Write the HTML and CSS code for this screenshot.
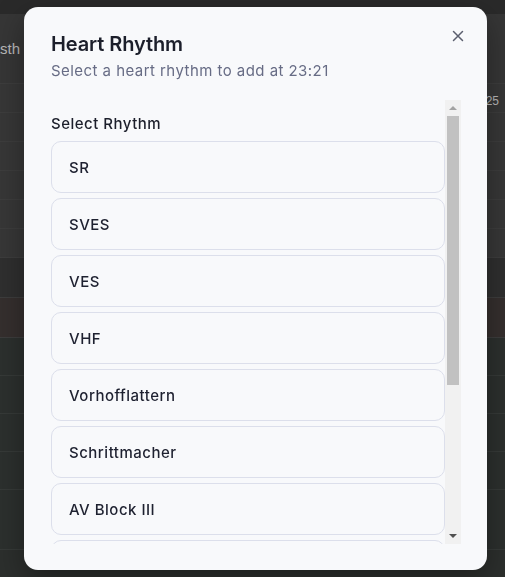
FILE: index.html
```html
<!DOCTYPE html>
<html lang="de">
<head>
<meta charset="utf-8">
<title>Heart Rhythm</title>
<link rel="stylesheet" href="styles.css">
</head>
<body>
<div class="page">
  <div class="band band-top"></div>
  <div class="band band-head"><span class="bg-text bg-left">Ästh</span></div>
  <div class="band band-row"><span class="bg-text bg-right">25</span></div>
  <div class="band band-row"></div>
  <div class="band band-row"></div>
  <div class="band band-row"></div>
  <div class="band band-row"></div>
  <div class="band band-row"></div>
  <div class="band band-dark"></div>
  <div class="band band-red"></div>
  <div class="band band-green"></div>
  <div class="band band-green"></div>
  <div class="band band-green"></div>
  <div class="band band-green"></div>
  <div class="band band-green last"><span class="red-line"></span></div>
</div>

<div class="overlay">
  <div class="modal" role="dialog" aria-labelledby="dlg-title">
    <button class="close" aria-label="Close">
      <svg width="12" height="12" viewBox="0 0 12 12"><path d="M1.5 1.5 L10.5 10.5 M10.5 1.5 L1.5 10.5" stroke="#5b5f6e" stroke-width="1.5" stroke-linecap="round"/></svg>
    </button>
    <header class="modal-head">
      <h2 id="dlg-title" class="title">Heart Rhythm</h2>
      <p class="subtitle">Select a heart rhythm to add at 23:21</p>
    </header>
    <div class="scroll-wrap">
      <div class="scroller">
        <div class="label">Select Rhythm</div>
        <div class="list">
          <button class="item">SR</button>
          <button class="item">SVES</button>
          <button class="item">VES</button>
          <button class="item">VHF</button>
          <button class="item">Vorhofflattern</button>
          <button class="item">Schrittmacher</button>
          <button class="item">AV Block III</button>
          <button class="item">AV Block II</button>
          <button class="item">AV Block I</button>
          <button class="item">Kammerflimmern</button>
          <button class="item">Asystolie</button>
        </div>
      </div>
      <div class="sbar" aria-hidden="true">
        <div class="sbtn"><span class="arrow-up"></span></div>
        <div class="strack"><div class="sthumb"></div></div>
        <div class="sbtn"><span class="arrow-down"></span></div>
      </div>
    </div>
  </div>
</div>
</body>
</html>
```

FILE: styles.css
```css
* { box-sizing: border-box; }
html, body { margin: 0; padding: 0; }
body {
  width: 505px;
  height: 577px;
  overflow: hidden;
  background: #2c2f2d;
  font-family: "Inter", "Noto Sans", sans-serif;
}

.page {
  display: flex;
  flex-direction: column;
}
.band {
  position: relative;
  border-bottom: 1px solid #3d3d3d;
}
.band-top { height: 14px; background: #2a2a2a; border-bottom: none; }
.band-head { height: 70px; background: #363636; }
.band-row { height: 29px; background: #373737; }
.band-dark { height: 40px; background: #2f2f2f; }
.band-red { height: 40px; background: #352f2e; }
.band-green { height: 38px; background: #2c302e; border-bottom-color: #363a38; }
.band-green.last { height: 60px; }

.bg-text {
  position: absolute;
  color: #b9b9b9;
  font-family: "Liberation Sans", sans-serif;
  font-size: 15px;
}
.bg-left { left: -10px; top: 26px; }
.bg-right { right: 6px; top: 10px; font-size: 12px; }
.red-line {
  position: absolute;
  left: 372px;
  bottom: 0;
  width: 2px;
  height: 12px;
  background: #6b1a1a;
}

.overlay {
  position: fixed;
  inset: 0;
  display: flex;
  justify-content: center;
  padding-top: 7px;
}

.modal {
  position: relative;
  width: 463px;
  height: 563px;
  margin-left: 6px;
  background: #f8f9fb;
  border-radius: 14px;
  box-shadow: 0 10px 30px rgba(0,0,0,0.35);
  padding: 25px 26px 26px 26px;
  display: flex;
  flex-direction: column;
}

.close {
  position: absolute;
  top: 21px;
  right: 21px;
  width: 16px;
  height: 16px;
  padding: 2px;
  border: none;
  background: transparent;
  display: flex;
  align-items: center;
  justify-content: center;
}

.modal-head { padding-left: 1px; }
.title {
  margin: 0;
  font-size: 20px;
  line-height: 24px;
  font-weight: 600;
  color: #1c1f2b;
  letter-spacing: -0.1px;
}
.subtitle {
  margin: 5px 0 0;
  font-size: 15px;
  line-height: 20px;
  color: #676c85;
  letter-spacing: 0.45px;
}

.scroll-wrap {
  margin-top: 19px;
  flex: 1;
  min-height: 0;
  display: flex;
}
.scroller {
  flex: 1;
  min-width: 0;
  overflow: hidden;
}

.sbar {
  width: 16px;
  display: flex;
  flex-direction: column;
  background: #f1f1f1;
}
.sbtn {
  height: 16px;
  display: flex;
  align-items: center;
  justify-content: center;
}
.arrow-up {
  width: 0;
  height: 0;
  border-left: 4px solid transparent;
  border-right: 4px solid transparent;
  border-bottom: 4px solid #a3a3a3;
}
.arrow-down {
  width: 0;
  height: 0;
  border-left: 4px solid transparent;
  border-right: 4px solid transparent;
  border-top: 4px solid #505050;
}
.strack {
  flex: 1;
  padding: 0 2px;
}
.sthumb {
  height: 269px;
  background: #c1c1c1;
}

.label {
  padding: 14px 0 8px 1px;
  font-size: 15px;
  line-height: 19px;
  font-weight: 500;
  color: #1c1f2b;
  letter-spacing: 0.5px;
}
.list {
  display: flex;
  flex-direction: column;
  gap: 5px;
  padding: 0 0 17px 1px;
}
.item {
  height: 52px;
  width: 100%;
  text-align: left;
  padding: 0 17px;
  background: #f8f9fb;
  border: 1px solid #dcdfeb;
  border-radius: 10px;
  font-family: inherit;
  font-size: 15px;
  font-weight: 500;
  color: #1e2130;
  letter-spacing: 0.5px;
}
```
